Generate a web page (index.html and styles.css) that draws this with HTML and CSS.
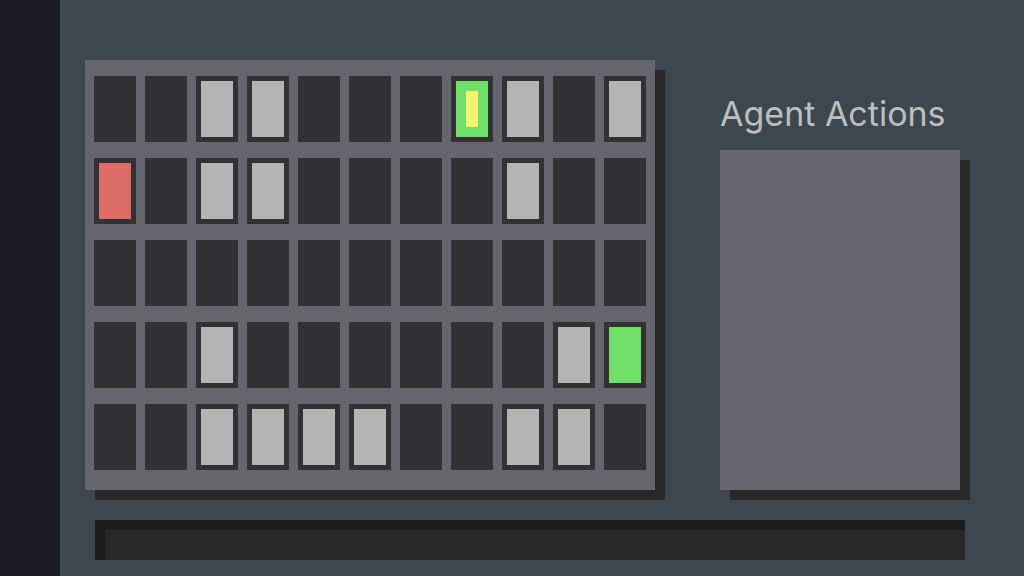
FILE: index.html
```html
<!DOCTYPE html>
<html lang="en">
<head>
<meta charset="utf-8">
<meta name="viewport" content="width=device-width, initial-scale=1">
<title>Agent Actions</title>
<link rel="stylesheet" href="styles.css">
</head>
<body>
<div class="app">
  <nav class="sidebar" aria-label="Sidebar"></nav>
  <main class="workspace">
    <div class="stage">
      <section class="board" aria-label="Grid world">
        <div class="cell"></div><div class="cell"></div><div class="cell wall"></div><div class="cell wall"></div><div class="cell"></div><div class="cell"></div><div class="cell"></div><div class="cell goal"><div class="agent"></div></div><div class="cell wall"></div><div class="cell"></div><div class="cell wall"></div>
        <div class="cell hazard"></div><div class="cell"></div><div class="cell wall"></div><div class="cell wall"></div><div class="cell"></div><div class="cell"></div><div class="cell"></div><div class="cell"></div><div class="cell wall"></div><div class="cell"></div><div class="cell"></div>
        <div class="cell"></div><div class="cell"></div><div class="cell"></div><div class="cell"></div><div class="cell"></div><div class="cell"></div><div class="cell"></div><div class="cell"></div><div class="cell"></div><div class="cell"></div><div class="cell"></div>
        <div class="cell"></div><div class="cell"></div><div class="cell wall"></div><div class="cell"></div><div class="cell"></div><div class="cell"></div><div class="cell"></div><div class="cell"></div><div class="cell"></div><div class="cell wall"></div><div class="cell goal"></div>
        <div class="cell"></div><div class="cell"></div><div class="cell wall"></div><div class="cell wall"></div><div class="cell wall"></div><div class="cell wall"></div><div class="cell"></div><div class="cell"></div><div class="cell wall"></div><div class="cell wall"></div><div class="cell"></div>
      </section>
      <aside class="actions">
        <h1 class="title">Agent Actions</h1>
        <div class="action-list"></div>
      </aside>
    </div>
    <div class="tray"></div>
  </main>
</div>
</body>
</html>
```
FILE: styles.css
```css
* {
  box-sizing: border-box;
}

body {
  margin: 0;
  background: #3d474f;
  font-family: Inter, "Noto Sans", sans-serif;
}

.app {
  display: flex;
  min-height: 100vh;
}

.sidebar {
  flex: 0 0 60px;
  background: #1c1a27;
}

.workspace {
  flex: 1;
  display: flex;
  flex-direction: column;
  gap: 30px;
  padding: 60px 59px 16px 25px;
}

.stage {
  display: flex;
  gap: 65px;
  padding-right: 5px;
}

.board {
  flex: 1;
  display: grid;
  grid-template-columns: repeat(11, 1fr);
  gap: 16px 9px;
  padding: 16px 9px 20px;
  background: #66656e;
  box-shadow: 10px 10px 0 #282828;
}

.cell {
  aspect-ratio: 7 / 11;
  border: 5px solid #323234;
  background: #323234;
}

.wall {
  background: #b4b4b4;
}

.hazard {
  background: #de6c66;
}

.goal {
  display: flex;
  padding: 10px;
  background: #70de68;
}

.agent {
  flex: 1;
  background: #f3f072;
}

.actions {
  flex: 0 0 240px;
  display: flex;
  flex-direction: column;
}

.title {
  margin: 0;
  padding: 30px 0 12px;
  color: #bebebe;
  font-size: 34px;
  font-weight: 400;
  line-height: 48px;
  white-space: nowrap;
}

.action-list {
  flex: 1;
  background: #66656e;
  box-shadow: 10px 10px 0 #282828;
}

.tray {
  height: 40px;
  margin-left: 10px;
  background: #282828;
  box-shadow: inset 10px 10px 0 #1c1c1d;
}
```
